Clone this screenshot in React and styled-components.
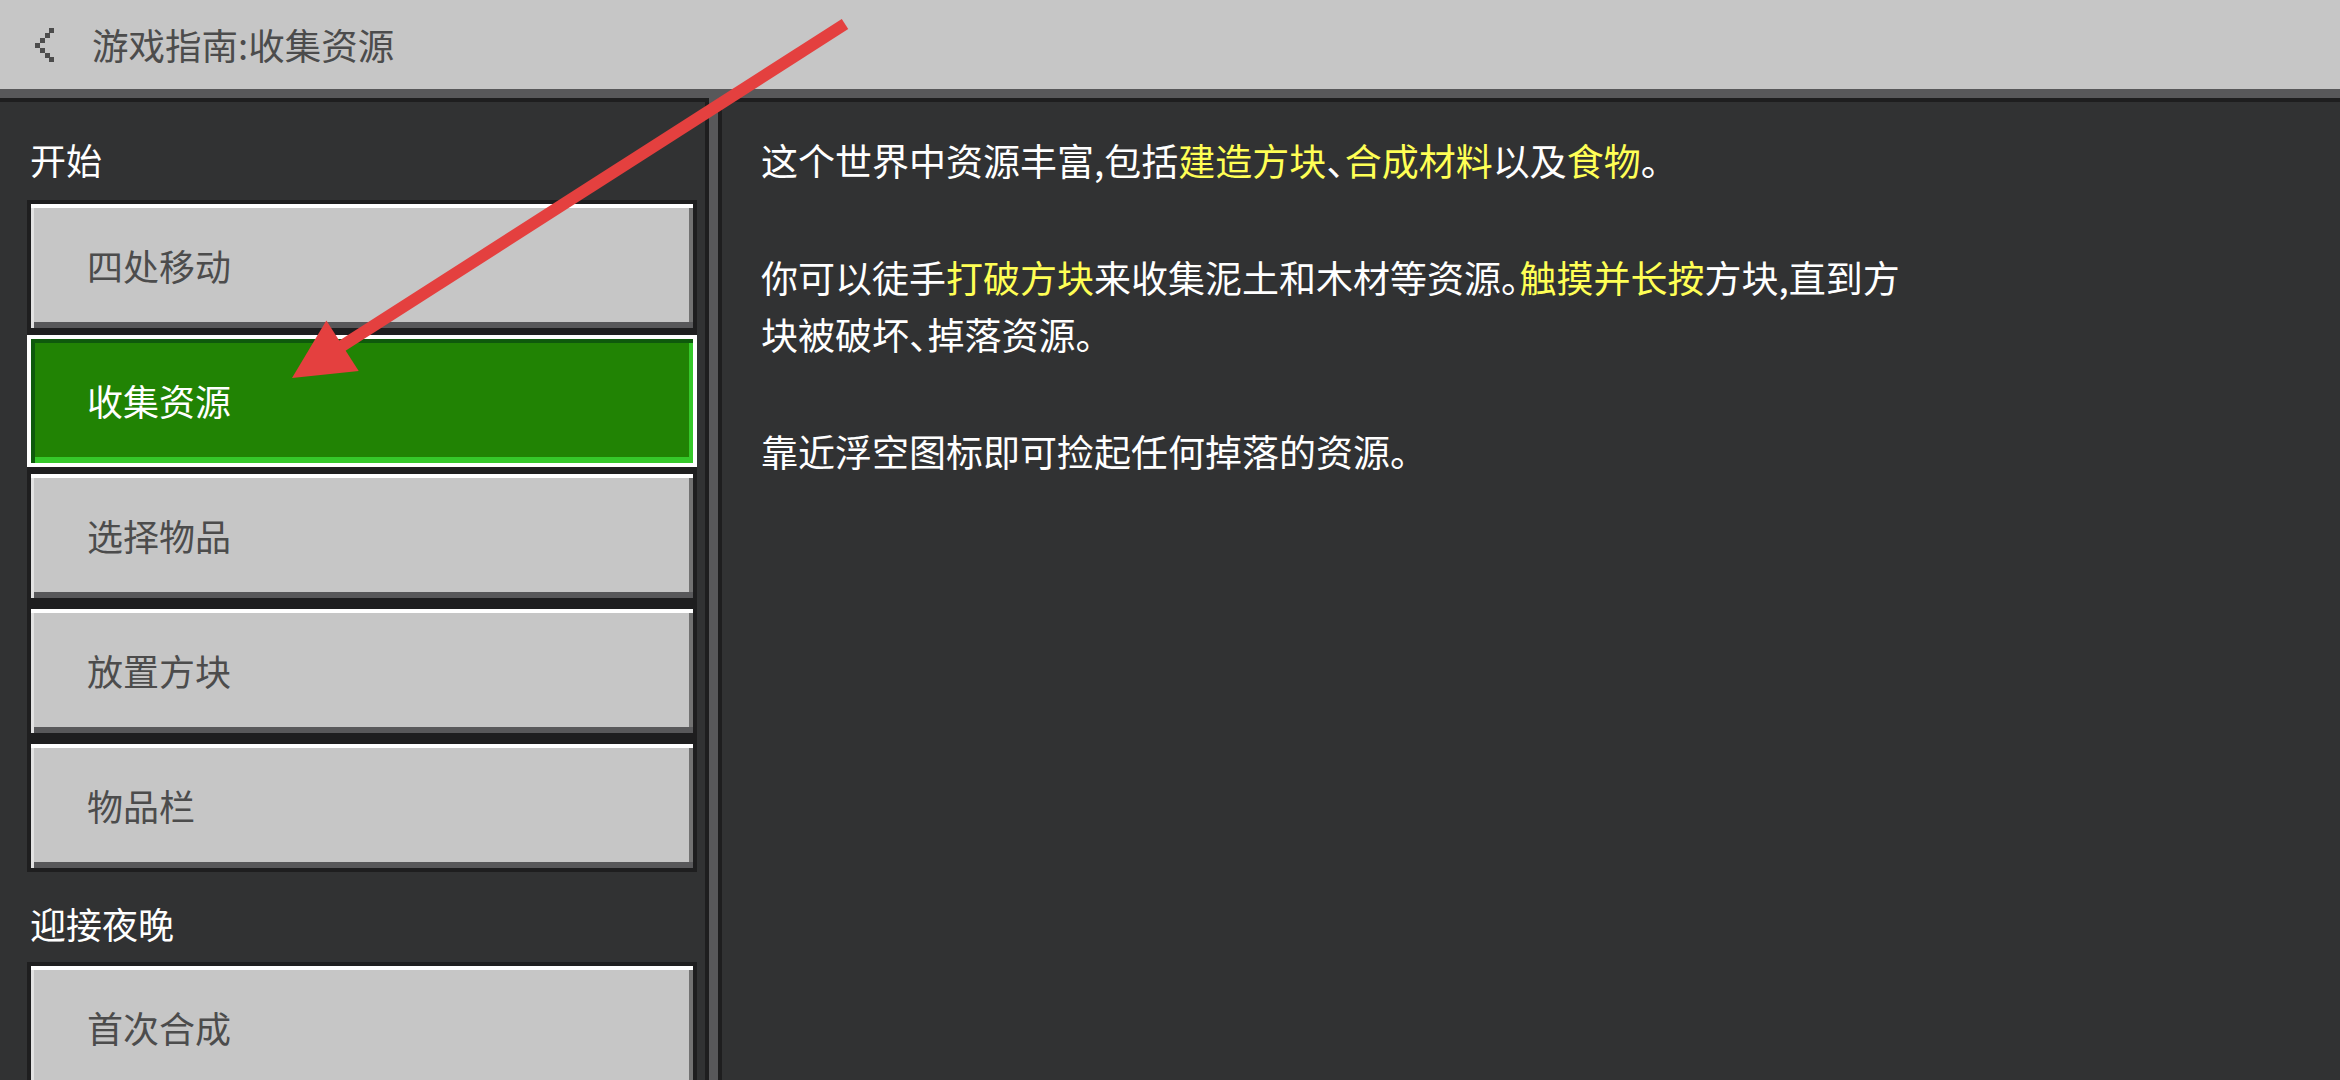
import React from "react";
import styled, { createGlobalStyle } from "styled-components";

const GlobalStyle = createGlobalStyle`
  html, body { margin: 0; padding: 0; background: #313233; }
  * { box-sizing: border-box; }
`;

const Page = styled.div`
  position: relative;
  width: 2340px;
  height: 1080px;
  overflow: hidden;
  display: flex;
  flex-direction: column;
  background: #58585a;
  font-family: "Noto Sans CJK SC", "Noto Sans", sans-serif;
`;

const Header = styled.header`
  flex: none;
  height: 89px;
  background: #c6c6c6;
  display: flex;
  align-items: center;
  padding-left: 35px;
`;

const BackIcon = styled.svg`
  flex: none;
  width: 19px;
  height: 34px;
  margin-right: 38px;
  fill: #4c4c4c;
`;

const Title = styled.h1`
  margin: 0;
  font-size: 36.5px;
  line-height: 44px;
  font-weight: 400;
  color: #4c4c4c;
  font-feature-settings: "halt";
`;

const Body = styled.div`
  flex: 1;
  min-height: 0;
  display: flex;
  gap: 9px;
  padding-top: 9px;
`;

const Sidebar = styled.nav`
  flex: none;
  width: 709px;
  background: #313233;
  border-top: 4px solid #1e1e1f;
  border-right: 4px solid #1e1e1f;
  padding: 35px 8px 0 27px;
  display: flex;
  flex-direction: column;
`;

const SectionLabel = styled.div`
  color: #ffffff;
  font-size: 36px;
  line-height: 44px;
  margin: ${(p) => (p.$first ? "0 0 19px 3px" : "29px 0 17px 3px")};
`;

const ButtonList = styled.div`
  display: flex;
  flex-direction: column;
  gap: 3px;
  background: #1e1e1f;
`;

const NavButton = styled.div`
  flex: none;
  height: 132px;
  display: flex;
  align-items: center;
  padding: 0 0 2px 56px;
  font-size: 36px;
  line-height: 44px;
  border: 4px solid ${(p) => (p.$active ? "#ffffff" : "#1e1e1f")};
  color: ${(p) => (p.$active ? "#ffffff" : "#4c4c4c")};
  background: ${(p) => (p.$active ? "#218304" : "#c6c6c6")};
  box-shadow: ${(p) =>
    p.$active
      ? "inset 0 4px 0 #0e5a0c, inset 4px 0 0 #0e5a0c, inset 0 -6px 0 #35c82a, inset -4px 0 0 #35c82a"
      : "inset 0 4px 0 #ffffff, inset 3px 0 0 #e2e2e2, inset 0 -6px 0 #58585a, inset -4px 0 0 #727272"};
`;

const Content = styled.main`
  flex: 1;
  background: #313233;
  border-top: 4px solid #1e1e1f;
  border-left: 4px solid #1e1e1f;
  padding: 30px 0 0 39px;
`;

const Paragraph = styled.p`
  margin: 0 0 60px;
  max-width: 1160px;
  font-size: 37px;
  line-height: 57px;
  color: #ffffff;
  font-feature-settings: "halt";
`;

const Hl = styled.span`
  color: #ffff55;
`;

const Overlay = styled.svg`
  position: absolute;
  left: 0;
  top: 0;
  pointer-events: none;
`;

const sections = [
  {
    label: "开始",
    items: ["四处移动", "收集资源", "选择物品", "放置方块", "物品栏"],
  },
  { label: "迎接夜晚", items: ["首次合成"] },
];

const dots = [
  [14, 0],
  [10, 5],
  [5, 10],
  [0, 15],
  [5, 20],
  [10, 25],
  [14, 29],
];

export default function App() {
  // arrow geometry
  const tip = [292, 378];
  const start = [845, 24];
  const dx = tip[0] - start[0];
  const dy = tip[1] - start[1];
  const len = Math.hypot(dx, dy);
  const ux = dx / len;
  const uy = dy / len;
  const headLen = 60;
  const half = 30;
  const bx = tip[0] - ux * headLen;
  const by = tip[1] - uy * headLen;
  const nx = -uy;
  const ny = ux;
  const head = `${tip[0]},${tip[1]} ${bx + nx * half},${by + ny * half} ${bx - nx * half},${by - ny * half}`;

  return (
    <>
      <GlobalStyle />
      <Page>
        <Header>
          <BackIcon viewBox="0 0 19 34">
            {dots.map(([x, y], i) => (
              <rect key={i} x={x} y={y} width="5" height="5" />
            ))}
          </BackIcon>
          <Title>游戏指南:收集资源</Title>
        </Header>
        <Body>
          <Sidebar>
            {sections.map((s, si) => (
              <React.Fragment key={s.label}>
                <SectionLabel $first={si === 0}>{s.label}</SectionLabel>
                <ButtonList>
                  {s.items.map((it) => (
                    <NavButton key={it} $active={it === "收集资源"}>
                      {it}
                    </NavButton>
                  ))}
                </ButtonList>
              </React.Fragment>
            ))}
          </Sidebar>
          <Content>
            <Paragraph>
              这个世界中资源丰富,包括<Hl>建造方块</Hl>、<Hl>合成材料</Hl>以及<Hl>食物</Hl>。
            </Paragraph>
            <Paragraph>
              你可以徒手<Hl>打破方块</Hl>来收集泥土和木材等资源。<Hl>触摸并长按</Hl>方块,直到方块被破坏、掉落资源。
            </Paragraph>
            <Paragraph>靠近浮空图标即可捡起任何掉落的资源。</Paragraph>
          </Content>
        </Body>
        <Overlay width="2340" height="1080" viewBox="0 0 2340 1080">
          <line
            x1={start[0]}
            y1={start[1]}
            x2={bx + ux * 4}
            y2={by + uy * 4}
            stroke="#e4403f"
            strokeWidth="12"
          />
          <polygon points={head} fill="#e4403f" />
        </Overlay>
      </Page>
    </>
  );
}
